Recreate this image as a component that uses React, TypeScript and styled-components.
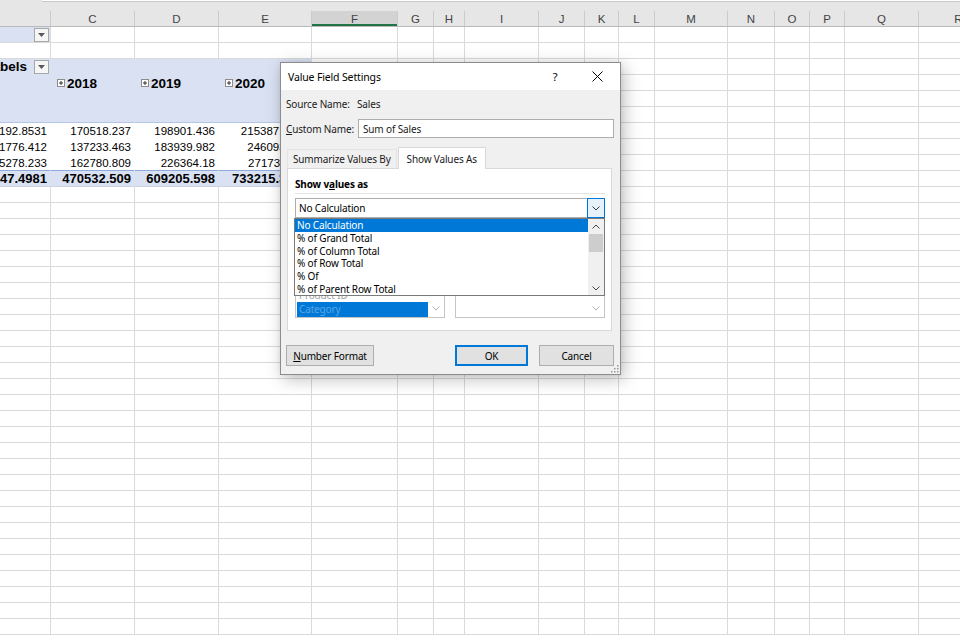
import React from "react";
import styled, { createGlobalStyle } from "styled-components";

const GlobalStyle = createGlobalStyle`
  html, body {
    margin: 0;
    padding: 0;
    background: #ffffff;
    overflow: hidden;
  }
`;

const GRID = "#dadada";
const BAND = "#d9e1f2";

const COLUMNS = [
  { id: "", w: 51 },
  { id: "C", w: 84 },
  { id: "D", w: 84 },
  { id: "E", w: 93 },
  { id: "F", w: 86 },
  { id: "G", w: 36 },
  { id: "H", w: 31 },
  { id: "I", w: 74 },
  { id: "J", w: 46 },
  { id: "K", w: 34 },
  { id: "L", w: 36 },
  { id: "M", w: 73 },
  { id: "N", w: 47 },
  { id: "O", w: 35 },
  { id: "P", w: 35 },
  { id: "Q", w: 74 },
  { id: "R", w: 80 },
];

const ROW_COUNT = 38;

const dataRows = [
  ["203192.8531", "170518.237", "198901.436", "215387.6523"],
  ["191776.412", "137233.463", "183939.982", "246093.507"],
  ["175278.233", "162780.809", "226364.18", "271734.211"],
];
const totals = ["570247.4981", "470532.509", "609205.598", "733215.3752"];
const years = ["", "2018", "2019", "2020"];

const showAsOptions = [
  "No Calculation",
  "% of Grand Total",
  "% of Column Total",
  "% of Row Total",
  "% Of",
  "% of Parent Row Total",
  "% of Parent Column Total",
];

const baseFields = ["Order Date", "Customer", "Product ID", "Category"];

type Kind = "grid" | "filter" | "band" | "bandEnd" | "data" | "dataEnd" | "total";

const KIND_STYLES: Record<Kind, { bg: string; right: string; bottom: string }> = {
  grid: { bg: "#ffffff", right: GRID, bottom: GRID },
  filter: { bg: BAND, right: GRID, bottom: GRID },
  band: { bg: BAND, right: BAND, bottom: BAND },
  bandEnd: { bg: BAND, right: BAND, bottom: "#b4c6e7" },
  data: { bg: "#ffffff", right: "#ffffff", bottom: "#ffffff" },
  dataEnd: { bg: "#ffffff", right: "#ffffff", bottom: "#8ea9db" },
  total: { bg: BAND, right: BAND, bottom: "#c8d2e8" },
};

/* ---------- sheet ---------- */

const Page = styled.div`
  position: relative;
  width: 960px;
  height: 640px;
  overflow: hidden;
  background: #fff;
  font-family: "Liberation Sans", Arial, sans-serif;
`;

const TopStrip = styled.div`
  height: 11px;
  background: #e6e6e6;
`;

const FormulaEdge = styled.div`
  margin-left: 42px;
  height: 1px;
  background: #fff;
  border-bottom: 1px solid #c9c9c9;
`;

const HeaderRow = styled.div`
  display: flex;
  height: 16px;
  box-sizing: border-box;
  background: #e6e6e6;
  border-bottom: 1px solid #b9b9b9;
`;

const HeadCell = styled.div<{ $w: number; $active?: boolean }>`
  flex: 0 0 ${(p) => p.$w}px;
  box-sizing: border-box;
  display: flex;
  align-items: center;
  justify-content: center;
  border-right: 1px solid #cbcbcb;
  font-size: 11.5px;
  color: #444;
  background: ${(p) => (p.$active ? "#d3d3d3" : "transparent")};
  box-shadow: ${(p) => (p.$active ? "inset 0 -2px 0 #217346" : "none")};
`;

const Row = styled.div`
  display: flex;
  height: 16px;
`;

const Cell = styled.div<{ $w: number; $kind: Kind; $align: "left" | "right" }>`
  flex: 0 0 ${(p) => p.$w}px;
  box-sizing: border-box;
  height: 16px;
  display: flex;
  align-items: center;
  justify-content: ${(p) => (p.$align === "right" ? "flex-end" : "flex-start")};
  padding: ${(p) => (p.$align === "right" ? "0 3px 0 0" : "0 0 0 6px")};
  overflow: hidden;
  background: ${(p) => KIND_STYLES[p.$kind].bg};
  border-right: 1px solid ${(p) => KIND_STYLES[p.$kind].right};
  border-bottom: 1px solid ${(p) => KIND_STYLES[p.$kind].bottom};
`;

const Num = styled.span<{ $bold?: boolean }>`
  flex-shrink: 0;
  white-space: nowrap;
  font-size: ${(p) => (p.$bold ? "13px" : "11.5px")};
  font-weight: ${(p) => (p.$bold ? 700 : 400)};
  color: #000;
`;

const HeadText = styled.span`
  flex-shrink: 0;
  white-space: nowrap;
  font-size: 13.5px;
  font-weight: 700;
  color: #000;
  margin-right: 7px;
`;

const YearLabel = styled.span`
  display: flex;
  align-items: center;
  gap: 2px;
  margin-top: 1px;
  font-size: 13.5px;
  font-weight: 700;
  color: #000;
  white-space: nowrap;
`;

const FilterButton = styled.span`
  flex-shrink: 0;
  width: 15px;
  height: 14px;
  box-sizing: border-box;
  margin-right: -2px;
  border: 1px solid #a8a8a8;
  background: #f6f6f6;
  display: flex;
  align-items: center;
  justify-content: center;
`;

const FilterArrow = () => (
  <svg width="7" height="4" viewBox="0 0 7 4">
    <path d="M0 0 H7 L3.5 4 Z" fill="#595959" />
  </svg>
);

const ExpandIcon = () => (
  <svg width="8" height="8" viewBox="0 0 8 8">
    <rect x="0.5" y="0.5" width="7" height="7" fill="#fff" stroke="#8c8c8c" />
    <path d="M2 4 H6 M4 2 V6" stroke="#333" strokeWidth="1" />
  </svg>
);

/* ---------- dialog ---------- */

const Dialog = styled.div`
  position: absolute;
  left: 280px;
  top: 62px;
  width: 341px;
  height: 313px;
  box-sizing: border-box;
  border: 1px solid #8c8c8c;
  background: #f0f0f0;
  box-shadow: 3px 4px 16px rgba(0, 0, 0, 0.26), 0 0 4px rgba(0, 0, 0, 0.08);
  display: flex;
  flex-direction: column;
  font-family: "Noto Sans", "Segoe UI", sans-serif;
  font-size: 10px;
  letter-spacing: -0.15px;
  color: #1a1a1a;
`;

const TitleBar = styled.div`
  height: 27px;
  flex-shrink: 0;
  background: #fff;
  display: flex;
  align-items: center;
  padding-left: 7px;
`;

const Title = styled.span`
  flex: 1;
  font-size: 10.5px;
  color: #000;
`;

const HelpButton = styled.span`
  width: 40px;
  text-align: center;
  font-size: 11px;
  color: #000;
`;

const CloseButton = styled.span`
  width: 45px;
  height: 27px;
  display: flex;
  align-items: center;
  justify-content: center;
`;

const Body = styled.div`
  flex: 1;
  display: flex;
  flex-direction: column;
  padding: 7px 6px 0 5px;
`;

const FieldRow = styled.div<{ $gap?: number }>`
  display: grid;
  grid-template-columns: 71px 1fr;
  align-items: center;
  margin-top: ${(p) => p.$gap ?? 0}px;
  min-height: 14px;
`;

const TextInput = styled.div`
  height: 19px;
  box-sizing: border-box;
  border: 1px solid #adadad;
  background: #fff;
  display: flex;
  align-items: center;
  padding-left: 4px;
  margin-left: 1px;
`;

const TabStrip = styled.div`
  margin-top: 9px;
  display: flex;
  align-items: flex-end;
  padding-left: 1px;
`;

const Tab = styled.div<{ $active?: boolean }>`
  position: relative;
  z-index: ${(p) => (p.$active ? 1 : 0)};
  height: ${(p) => (p.$active ? 22 : 19)}px;
  margin-bottom: ${(p) => (p.$active ? -1 : 0)}px;
  box-sizing: border-box;
  padding: 0 ${(p) => (p.$active ? 8 : 5)}px;
  display: flex;
  align-items: center;
  background: ${(p) => (p.$active ? "#fff" : "#f0f0f0")};
  border: 1px solid ${(p) => (p.$active ? "#d9d9d9" : "#e4e4e4")};
  border-bottom: none;
  margin-left: ${(p) => (p.$active ? 1 : 0)}px;
`;

const Panel = styled.div`
  height: 163px;
  box-sizing: border-box;
  margin: 0 2px 0 1px;
  background: #fff;
  border: 1px solid #d9d9d9;
  display: flex;
  flex-direction: column;
  padding: 0 6px 0 7px;
`;

const PanelHeading = styled.div`
  margin-top: 8px;
  height: 14px;
  display: flex;
  align-items: center;
  font-weight: 700;
  color: #000;
`;

const Separator = styled.div`
  margin-top: 2px;
  height: 1px;
  background: #e3e3e3;
`;

const ComboWrap = styled.div`
  position: relative;
  margin-top: 4px;
  height: 20px;
`;

const Combo = styled.div`
  height: 20px;
  box-sizing: border-box;
  border: 1px solid #adadad;
  background: #fff;
  display: flex;
`;

const ComboText = styled.span`
  flex: 1;
  display: flex;
  align-items: center;
  padding-left: 3px;
  color: #000;
`;

const ComboButton = styled.span`
  width: 18px;
  margin: -1px -1px -1px 0;
  box-sizing: border-box;
  border: 1px solid #0078d7;
  background: #e5f1fb;
  display: flex;
  align-items: center;
  justify-content: center;
`;

const DropList = styled.div`
  position: absolute;
  z-index: 3;
  top: 20px;
  left: -1px;
  right: 0;
  height: 78px;
  box-sizing: border-box;
  border: 1px solid #7a7a7a;
  background: #fff;
  display: flex;
`;

const DropItems = styled.div`
  flex: 1;
  overflow: hidden;
`;

const DropItem = styled.div<{ $selected?: boolean }>`
  height: 12.8px;
  line-height: 12.8px;
  padding-left: 2px;
  white-space: nowrap;
  background: ${(p) => (p.$selected ? "#0078d7" : "transparent")};
  color: ${(p) => (p.$selected ? "#fff" : "#000")};
`;

const ScrollBar = styled.div`
  width: 16px;
  background: #f0f0f0;
  display: flex;
  flex-direction: column;
  align-items: center;
`;

const ScrollArrow = styled.div`
  height: 14px;
  width: 100%;
  display: flex;
  align-items: center;
  justify-content: center;
`;

const ScrollThumb = styled.div`
  margin-top: 1px;
  width: 14px;
  height: 18px;
  background: #cdcdcd;
`;

const ScrollFill = styled.div`
  flex: 1;
`;

const BaseBoxes = styled.div`
  margin-top: 50px;
  display: flex;
  gap: 10px;
`;

const BaseBox = styled.div`
  width: 150px;
  height: 50px;
  box-sizing: border-box;
  border: 1px solid #c4c4c4;
  background: #fff;
  display: flex;
`;

const BoxList = styled.div`
  flex: 1;
  overflow: hidden;
  display: flex;
  flex-direction: column;
  justify-content: flex-end;
  padding: 0 0 0 1px;
`;

const BoxItem = styled.div<{ $selected?: boolean }>`
  flex-shrink: 0;
  height: ${(p) => (p.$selected ? 15 : 13)}px;
  line-height: ${(p) => (p.$selected ? 15 : 13)}px;
  padding-left: 2px;
  background: ${(p) => (p.$selected ? "#0078d7" : "transparent")};
  color: ${(p) => (p.$selected ? "rgba(255,255,255,0.35)" : "#a3a3a3")};
  white-space: nowrap;
`;

const BoxScroll = styled.div`
  width: 16px;
  display: flex;
  flex-direction: column;
  justify-content: flex-end;
  align-items: center;
  padding-bottom: 6px;
`;

const ButtonRow = styled.div`
  margin-top: 14px;
  display: flex;
  gap: 11px;
`;

const Spacer = styled.div`
  flex: 1;
`;

const Button = styled.div<{ $w: number; $primary?: boolean }>`
  width: ${(p) => p.$w}px;
  height: 21px;
  box-sizing: border-box;
  display: flex;
  align-items: center;
  justify-content: center;
  background: #e1e1e1;
  border: 1px solid ${(p) => (p.$primary ? "#0078d7" : "#adadad")};
  box-shadow: ${(p) => (p.$primary ? "inset 0 0 0 1px #0078d7" : "none")};
  color: #000;
`;

const Grip = styled.span`
  position: absolute;
  right: 1px;
  bottom: 1px;
  display: flex;
`;

const Chevron = ({ up = false, color = "#333" }: { up?: boolean; color?: string }) => (
  <svg width="8" height="5" viewBox="0 0 8 5">
    <path
      d={up ? "M0.5 4.5 L4 1 L7.5 4.5" : "M0.5 0.5 L4 4 L7.5 0.5"}
      fill="none"
      stroke={color}
      strokeWidth="1"
    />
  </svg>
);

const CloseIcon = () => (
  <svg width="11" height="11" viewBox="0 0 11 11">
    <path d="M0.5 0.5 L10.5 10.5 M10.5 0.5 L0.5 10.5" stroke="#000" strokeWidth="1" />
  </svg>
);

const GripIcon = () => (
  <svg width="10" height="10" viewBox="0 0 10 10">
    {[
      [8, 2],
      [8, 5],
      [5, 5],
      [8, 8],
      [5, 8],
      [2, 8],
    ].map(([x, y]) => (
      <rect key={`${x}-${y}`} x={x} y={y} width="1.5" height="1.5" fill="#9a9a9a" />
    ))}
  </svg>
);

type CellSpec = { kind: Kind; align?: "left" | "right"; content?: React.ReactNode };

function specFor(r: number, c: number): CellSpec {
  const inPivot = c <= 3;
  if (r === 0 && c === 0) {
    return {
      kind: "filter",
      align: "right",
      content: (
        <FilterButton>
          <FilterArrow />
        </FilterButton>
      ),
    };
  }
  if (r >= 2 && r <= 5 && inPivot) {
    const kind: Kind = r === 5 ? "bandEnd" : "band";
    if (r === 2 && c === 0) {
      return {
        kind,
        align: "right",
        content: (
          <>
            <HeadText>Column Labels</HeadText>
            <FilterButton>
              <FilterArrow />
            </FilterButton>
          </>
        ),
      };
    }
    if (r === 3 && c >= 1) {
      return {
        kind,
        align: "left",
        content: (
          <YearLabel>
            <ExpandIcon />
            {years[c]}
          </YearLabel>
        ),
      };
    }
    return { kind };
  }
  if (r >= 6 && r <= 8 && inPivot) {
    return {
      kind: r === 8 ? "dataEnd" : "data",
      align: "right",
      content: <Num>{dataRows[r - 6][c]}</Num>,
    };
  }
  if (r === 9 && inPivot) {
    return { kind: "total", align: "right", content: <Num $bold>{totals[c]}</Num> };
  }
  return { kind: "grid" };
}

function Sheet() {
  return (
    <>
      <TopStrip>
        <FormulaEdge />
      </TopStrip>
      <HeaderRow>
        {COLUMNS.map((col) => (
          <HeadCell key={col.id || "B"} $w={col.w} $active={col.id === "F"}>
            {col.id}
          </HeadCell>
        ))}
      </HeaderRow>
      {Array.from({ length: ROW_COUNT }, (_, r) => (
        <Row key={r}>
          {COLUMNS.map((col, c) => {
            const spec = specFor(r, c);
            return (
              <Cell key={c} $w={col.w} $kind={spec.kind} $align={spec.align ?? "right"}>
                {spec.content}
              </Cell>
            );
          })}
        </Row>
      ))}
    </>
  );
}

function ValueFieldSettings() {
  return (
    <Dialog>
      <TitleBar>
        <Title>Value Field Settings</Title>
        <HelpButton>?</HelpButton>
        <CloseButton>
          <CloseIcon />
        </CloseButton>
      </TitleBar>
      <Body>
        <FieldRow>
          <span>Source Name:</span>
          <span>Sales</span>
        </FieldRow>
        <FieldRow $gap={8}>
          <span>
            <u>C</u>ustom Name:
          </span>
          <TextInput>Sum of Sales</TextInput>
        </FieldRow>
        <TabStrip>
          <Tab>Summarize Values By</Tab>
          <Tab $active>Show Values As</Tab>
        </TabStrip>
        <Panel>
          <PanelHeading>
            Show v<u>a</u>lues as
          </PanelHeading>
          <Separator />
          <ComboWrap>
            <Combo>
              <ComboText>No Calculation</ComboText>
              <ComboButton>
                <Chevron color="#3c3c3c" />
              </ComboButton>
            </Combo>
            <DropList>
              <DropItems>
                {showAsOptions.map((opt, i) => (
                  <DropItem key={opt} $selected={i === 0}>
                    {opt}
                  </DropItem>
                ))}
              </DropItems>
              <ScrollBar>
                <ScrollArrow>
                  <Chevron up color="#444" />
                </ScrollArrow>
                <ScrollThumb />
                <ScrollFill />
                <ScrollArrow>
                  <Chevron color="#444" />
                </ScrollArrow>
              </ScrollBar>
            </DropList>
          </ComboWrap>
          <BaseBoxes>
            <BaseBox>
              <BoxList>
                {baseFields.map((f, i) => (
                  <BoxItem key={f} $selected={i === baseFields.length - 1}>
                    {f}
                  </BoxItem>
                ))}
              </BoxList>
              <BoxScroll>
                <Chevron color="#b0b0b0" />
              </BoxScroll>
            </BaseBox>
            <BaseBox>
              <BoxList />
              <BoxScroll>
                <Chevron color="#b0b0b0" />
              </BoxScroll>
            </BaseBox>
          </BaseBoxes>
        </Panel>
        <ButtonRow>
          <Button $w={88}>
            <span>
              <u>N</u>umber Format
            </span>
          </Button>
          <Spacer />
          <Button $w={73} $primary>
            OK
          </Button>
          <Button $w={75}>Cancel</Button>
        </ButtonRow>
      </Body>
      <Grip>
        <GripIcon />
      </Grip>
    </Dialog>
  );
}

export default function App() {
  return (
    <Page>
      <GlobalStyle />
      <Sheet />
      <ValueFieldSettings />
    </Page>
  );
}
